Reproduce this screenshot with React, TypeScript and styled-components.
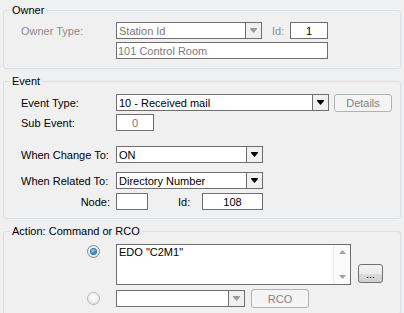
import React from "react";
import styled, { createGlobalStyle, css } from "styled-components";

const Global = createGlobalStyle`
  html, body { margin: 0; padding: 0; background: #f0f0f0; }
  body { font-family: "Liberation Sans", Arial, sans-serif; font-size: 11px; color: #000; }
`;

const Page = styled.div`
  width: 404px;
  height: 313px;
  box-sizing: border-box;
  padding: 3px 3px 0 3px;
  display: flex;
  flex-direction: column;
  gap: 5px;
  background: #f0f0f0;
  overflow: hidden;
`;

const Group = styled.fieldset`
  margin: 0;
  padding: 0;
  min-width: 0;
  border: 1px solid #d5dfe5;
  border-radius: 3px;
`;

const Legend = styled.legend`
  margin-left: 6px;
  padding: 0 2px;
  line-height: 14px;
  font-size: 11px;
  color: #000;
`;

const Body = styled.div<{ $pt: number; $pb: number; $pl?: number }>`
  display: flex;
  flex-direction: column;
  padding: ${(p) => p.$pt}px 0 ${(p) => p.$pb}px ${(p) => p.$pl ?? 17}px;
`;

const Row = styled.div<{ $mt?: number; $h?: number }>`
  display: flex;
  align-items: center;
  height: ${(p) => p.$h ?? 17}px;
  margin-top: ${(p) => p.$mt ?? 0}px;
`;

const Label = styled.span<{ $w?: number; $disabled?: boolean; $right?: boolean; $ml?: number }>`
  width: ${(p) => (p.$w ? `${p.$w}px` : "auto")};
  flex: none;
  margin-left: ${(p) => p.$ml ?? 0}px;
  box-sizing: border-box;
  white-space: nowrap;
  color: ${(p) => (p.$disabled ? "#8d8d8d" : "#000")};
  ${(p) =>
    p.$right &&
    css`
      text-align: right;
      padding-right: 6px;
    `}
`;

const Box = styled.div<{ $w: number; $disabled?: boolean; $center?: boolean; $ml?: number; $h?: number }>`
  width: ${(p) => p.$w}px;
  height: ${(p) => p.$h ?? 17}px;
  margin-left: ${(p) => p.$ml ?? 0}px;
  flex: none;
  box-sizing: border-box;
  border: 1px solid #6e6e6e;
  background: #fff;
  display: flex;
  align-items: center;
  justify-content: ${(p) => (p.$center ? "center" : "flex-start")};
  padding: 0 ${(p) => (p.$center ? 0 : 1)}px;
  color: ${(p) => (p.$disabled ? "#7a7a7a" : "#000")};
  white-space: nowrap;
  overflow: hidden;
`;

const ComboText = styled.span`
  flex: 1;
  padding-left: 1px;
`;

const DropBtn = styled.span<{ $disabled?: boolean }>`
  flex: none;
  width: 15px;
  align-self: stretch;
  border-left: 1px solid #6e6e6e;
  background: #f0f0f0;
  display: flex;
  align-items: center;
  justify-content: center;
  margin-right: -1px;
  color: ${(p) => (p.$disabled ? "#9a9a9a" : "#000")};
`;

const Button = styled.div<{ $w: number; $h: number; $disabled?: boolean; $ml?: number }>`
  width: ${(p) => p.$w}px;
  height: ${(p) => p.$h}px;
  margin-left: ${(p) => p.$ml ?? 0}px;
  flex: none;
  box-sizing: border-box;
  border-radius: 3px;
  display: flex;
  align-items: center;
  justify-content: center;
  ${(p) =>
    p.$disabled
      ? css`
          border: 1px solid #adb2b5;
          background: #f4f4f4;
          color: #838383;
        `
      : css`
          border: 1px solid #707070;
          background: linear-gradient(#f2f2f2 0%, #ebebeb 50%, #dddddd 51%, #cfcfcf 100%);
          color: #000;
        `}
`;

const TextArea = styled.div`
  width: 235px;
  height: 41px;
  flex: none;
  box-sizing: border-box;
  border: 1px solid #6e6e6e;
  background: #fff;
  display: flex;
`;

const AreaText = styled.div`
  flex: 1;
  padding: 1px 2px;
  line-height: 13px;
`;

const ScrollBar = styled.div`
  width: 16px;
  flex: none;
  border-left: 1px solid #ececec;
  background: #fbfbfb;
  display: flex;
  flex-direction: column;
  justify-content: space-between;
  align-items: center;
  padding: 5px 0 5px;
  color: #a0a0a0;
`;

const RadioCell = styled.div<{ $top?: boolean }>`
  width: 112px;
  flex: none;
  display: flex;
  justify-content: flex-end;
  padding-right: 16px;
  box-sizing: border-box;
  align-self: ${(p) => (p.$top ? "flex-start" : "center")};
  margin-top: ${(p) => (p.$top ? 1 : 0)}px;
`;

const Radio = styled.span<{ $checked?: boolean }>`
  width: 13px;
  height: 13px;
  box-sizing: border-box;
  border-radius: 50%;
  border: 1px solid ${(p) => (p.$checked ? "#7e8a93" : "#b5b5b5")};
  background: radial-gradient(circle at 50% 40%, #ffffff 0%, #f0f0f0 55%, #d4d4d4 100%);
  display: flex;
  align-items: center;
  justify-content: center;
  ${(p) =>
    p.$checked &&
    css`
      &::after {
        content: "";
        width: 5px;
        height: 5px;
        border-radius: 50%;
        background: radial-gradient(circle at 40% 35%, #a6e0ff 0%, #2f8ed3 50%, #11568f 100%);
        box-shadow: 0 0 0 1px #3a6f98;
      }
    `}
`;

const ActionRow = styled.div<{ $mt?: number }>`
  display: flex;
  align-items: center;
  margin-top: ${(p) => p.$mt ?? 0}px;
`;

const DotsWrap = styled.div`
  align-self: flex-end;
  margin: 0 0 2px 7px;
`;

const Arrow = ({ up }: { up?: boolean }) => (
  <svg width="7" height="5" viewBox="0 0 7 5" style={{ display: "block", transform: up ? "rotate(180deg)" : undefined }}>
    <rect x="0" y="0" width="7" height="1" fill="currentColor" />
    <polygon points="0,1 7,1 3.5,5" fill="currentColor" />
  </svg>
);

const SmallArrow = ({ up }: { up?: boolean }) => (
  <svg width="7" height="4" viewBox="0 0 7 4" style={{ display: "block" }}>
    <polygon points={up ? "3.5,0 7,4 0,4" : "0,0 7,0 3.5,4"} fill="currentColor" />
  </svg>
);

const Combo = ({ w, text, disabled, ml }: { w: number; text: string; disabled?: boolean; ml?: number }) => (
  <Box $w={w} $disabled={disabled} $ml={ml}>
    <ComboText>{text}</ComboText>
    <DropBtn $disabled={disabled}>
      <Arrow />
    </DropBtn>
  </Box>
);

export default function App() {
  return (
    <>
      <Global />
      <Page>
        <Group>
          <Legend>Owner</Legend>
          <Body $pt={5} $pb={9}>
            <Row>
              <Label $w={95} $disabled>Owner Type:</Label>
              <Combo w={146} text="Station Id" disabled />
              <Label $w={18} $ml={10} $disabled>Id:</Label>
              <Box $w={38} $center>1</Box>
            </Row>
            <Row $mt={3}>
              <Label $w={95} />
              <Box $w={212} $disabled>101 Control Room</Box>
            </Row>
          </Body>
        </Group>

        <Group>
          <Legend>Event</Legend>
          <Body $pt={6} $pb={8}>
            <Row>
              <Label $w={95}>Event Type:</Label>
              <Combo w={213} text="10 - Received mail" />
              <Button $w={58} $h={18} $ml={5} $disabled>Details</Button>
            </Row>
            <Row $mt={3}>
              <Label $w={95}>Sub Event:</Label>
              <Box $w={38} $center $disabled>0</Box>
            </Row>
            <Row $mt={15}>
              <Label $w={95}>When Change To:</Label>
              <Combo w={147} text="ON" />
            </Row>
            <Row $mt={9}>
              <Label $w={95}>When Related To:</Label>
              <Combo w={147} text="Directory Number" />
            </Row>
            <Row $mt={4}>
              <Label $w={95} $right>Node:</Label>
              <Box $w={32} />
              <Label $w={24} $ml={30}>Id:</Label>
              <Box $w={61} $center>108</Box>
            </Row>
          </Body>
        </Group>

        <Group>
          <Legend>Action: Command or RCO</Legend>
          <Body $pt={6} $pb={6} $pl={0}>
            <ActionRow>
              <RadioCell $top>
                <Radio $checked />
              </RadioCell>
              <TextArea>
                <AreaText>EDO "C2M1"</AreaText>
                <ScrollBar>
                  <SmallArrow up />
                  <SmallArrow />
                </ScrollBar>
              </TextArea>
              <DotsWrap>
                <Button $w={25} $h={19}>...</Button>
              </DotsWrap>
            </ActionRow>
            <ActionRow $mt={4}>
              <RadioCell>
                <Radio />
              </RadioCell>
              <Combo w={129} text="" disabled />
              <Button $w={58} $h={19} $ml={6} $disabled>RCO</Button>
            </ActionRow>
          </Body>
        </Group>
      </Page>
    </>
  );
}
